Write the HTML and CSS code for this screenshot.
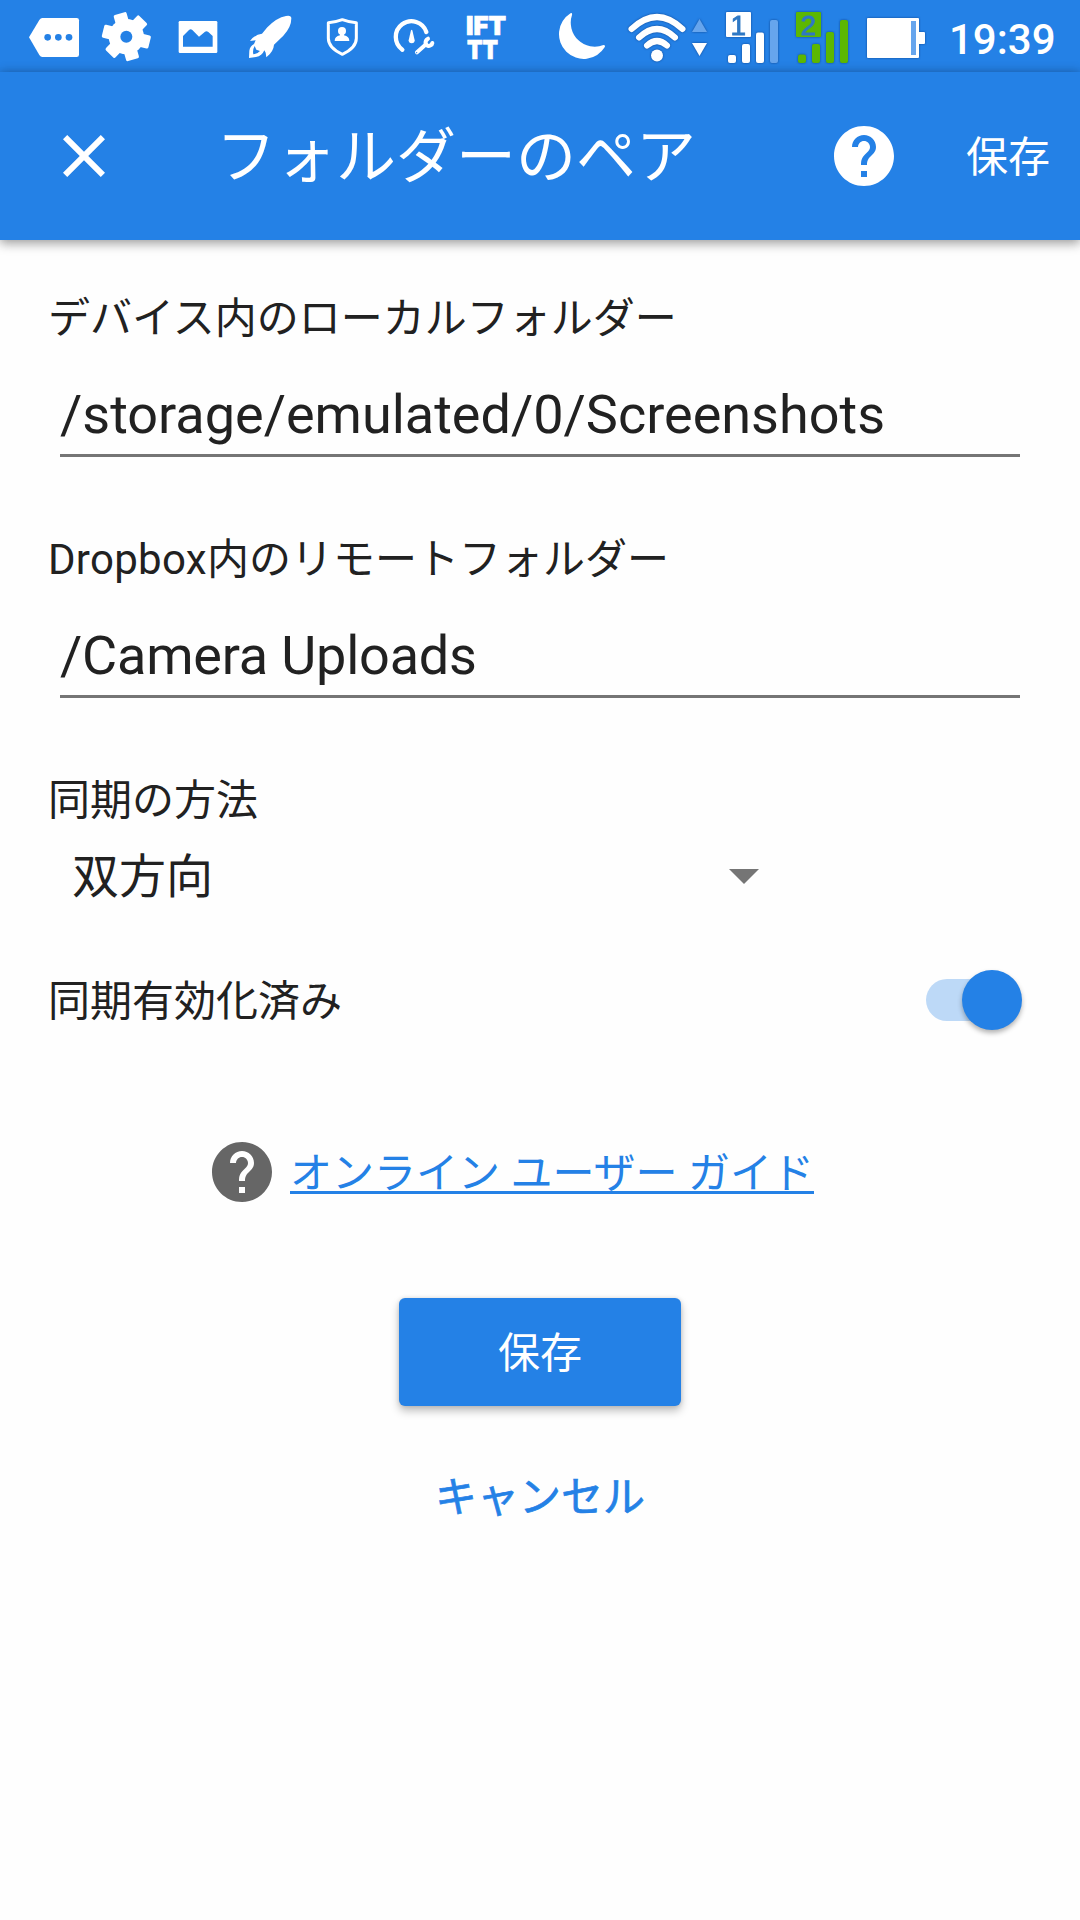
FILE: index.html
```html
<!DOCTYPE html>
<html lang="ja">
<head>
    <meta charset="utf-8">
    <title>フォルダーのペア</title>
    <link rel="stylesheet" href="styles.css">
</head>
<body>
<div class="status">
    <div class="notify">
        <svg width="72" height="72" viewBox="54 0 216 216">
            <path fill="#fff" d="M127 54H230Q237 54 237 61V164Q237 171 230 171H127Q122 171 118 165L87 112L118 60Q122 54 127 54Z"/>
            <g fill="#2481e6"><circle cx="143" cy="112" r="10"/><circle cx="175" cy="112" r="10"/><circle cx="207" cy="112" r="10"/></g>
        </svg>
        <svg width="72" height="72" viewBox="270 0 216 216">
            <g fill="#fff">
                <circle cx="379" cy="110" r="53"/>
                <rect x="307" y="90" width="144" height="40" rx="5" transform="rotate(14 379 110)"/>
                <rect x="307" y="90" width="144" height="40" rx="5" transform="rotate(74 379 110)"/>
                <rect x="307" y="90" width="144" height="40" rx="5" transform="rotate(134 379 110)"/>
            </g>
            <circle cx="379" cy="110" r="18" fill="#2481e6"/>
        </svg>
        <svg width="72" height="72" viewBox="486 0 216 216">
            <rect x="536" y="63" width="116" height="96" rx="4" fill="#fff"/>
            <path fill="#2481e6" d="M549 140V108L567 90Q572 86 577 90L597 110L615 95Q620 92 625 96L638 108V140Z"/>
        </svg>
        <svg width="72" height="72" viewBox="12 0 216 216">
            <path fill="#fff" d="M168 48Q184 45 184 55Q184 82 160 107L132 134Q131 154 109 172L107 158L103 151Q96 168 78 171L57 174L58 152Q60 138 72 132L77 121L60 123Q74 104 96 101L112 82Q140 53 168 48Z"/>
            <path fill="#2481e6" d="M74 138L79 149L90 153Q84 161 70 163Q67 150 74 138Z"/>
        </svg>
        <svg width="72" height="72" viewBox="228 0 216 216">
            <path fill="none" stroke="#fff" stroke-width="9" stroke-linejoin="round" d="M337 59Q358 67 379 68V115Q379 144 337 163Q295 144 295 115V68Q316 67 337 59Z"/>
            <circle cx="336" cy="93" r="12" fill="#fff"/>
            <path fill="#fff" d="M314 123Q314 109 330 106V100H342V106Q358 109 358 123Z"/>
        </svg>
        <svg width="72" height="72" viewBox="444 0 216 216">
            <path fill="none" stroke="#fff" stroke-width="13" stroke-linecap="round" d="M517 149A47 47 0 1 1 589 96"/>
            <path fill="#fff" d="M543 91Q545 88 547 91L554 121A9 9 0 1 1 536 121Z"/>
            <path fill="none" stroke="#fff" stroke-width="12" stroke-linecap="round" d="M561 157L588 133"/>
            <path fill="none" stroke="#fff" stroke-width="12" stroke-linecap="round" stroke-linejoin="round" d="M594 116Q585 121 587 131Q592 141 602 136Q606 134 607 129"/>
            <circle cx="560" cy="158" r="2" fill="#2481e6"/>
        </svg>
        <svg width="72" height="72" viewBox="450 0 72 72">
            <g class="ifttt">
                <text x="466" y="35" textLength="40" lengthAdjust="spacingAndGlyphs">IFT</text>
                <text x="467" y="58.500" textLength="31" lengthAdjust="spacingAndGlyphs">TT</text>
            </g>
        </svg>
    </div>
    <div class="system">
        <svg width="72" height="72" viewBox="545 0 72 72">
            <path fill="#fff" d="M571.500 13.300A24.700 24.700 0 1 0 605.800 47Q606.500 45 604.500 45A24 24 0 0 1 573 15Q573.500 12.500 571.500 13.300Z"/>
        </svg>
        <svg class="outlined" width="96" height="72" viewBox="616 0 96 72">
            <g fill="none" stroke="#fff" stroke-width="6" stroke-linecap="round">
                <path d="M631.500 29Q657 5 682.500 29"/>
                <path d="M639 37.500Q657 20.500 675 37.500"/>
                <path d="M647 45.500Q657 36.500 667 45.500"/>
            </g>
            <circle cx="657" cy="55.500" r="6" fill="#fff"/>
            <path fill="#66a5ed" d="M699.500 19L707 32H692Z"/>
            <path fill="#fff" d="M699.500 56L692 43H707Z"/>
        </svg>
        <svg class="outlined" width="74" height="72" viewBox="712 0 74 72">
            <g fill="#fff">
                <rect x="726" y="12" width="25" height="25" rx="1"/>
                <rect x="728" y="55" width="8" height="8" rx="2"/>
                <rect x="742" y="44" width="8" height="19" rx="2"/>
                <rect x="756" y="32.500" width="8" height="30.500" rx="2"/>
            </g>
            <rect x="770" y="20" width="8" height="43" rx="2" fill="#66a5ed"/>
            <text class="sim" x="730.500" y="34.500">1</text>
        </svg>
        <svg class="outlined" width="72" height="72" viewBox="786 0 72 72">
            <g fill="#5cb702">
                <rect x="796" y="12" width="25" height="25" rx="1"/>
                <rect x="798" y="54.500" width="8" height="8.500" rx="2"/>
                <rect x="812" y="44" width="8" height="19" rx="2"/>
                <rect x="826" y="32" width="8" height="31" rx="2"/>
                <rect x="840" y="20" width="8" height="43" rx="2"/>
            </g>
            <text class="sim" x="800.500" y="34.500">2</text>
        </svg>
        <svg class="outlined" width="91" height="72" viewBox="858 0 91 72">
            <path fill="#fff" d="M868 18H918Q919 18 919 19V32H924Q925 32 925 33V43Q925 44 924 44H919V57Q919 58 918 58H868Q867 58 867 57V19Q867 18 868 18Z"/>
            <rect x="911" y="21" width="5" height="34" fill="#66a5ed"/>
        </svg>
        <span class="clock">19:39</span>
    </div>
</div>

<div class="toolbar">
    <svg class="close" width="42" height="42" viewBox="5 5 14 14">
        <path fill="#fff" d="M19 6.410L17.590 5 12 10.590 6.410 5 5 6.410 10.590 12 5 17.590 6.410 19 12 13.410 17.590 19 19 17.590 13.410 12z"/>
    </svg>
    <h1>フォルダーのペア</h1>
    <svg class="help" width="60" height="60" viewBox="2 2 20 20">
        <path fill="#fff" d="M12 2C6.480 2 2 6.480 2 12s4.480 10 10 10 10-4.480 10-10S17.520 2 12 2zm1 17h-2v-2h2v2zm2.070-7.750l-.9.920C13.450 12.900 13 13.500 13 15h-2v-.5c0-1.100.450-2.100 1.170-2.830l1.240-1.260c.370-.360.590-.860.590-1.410 0-1.100-.9-2-2-2s-2 .9-2 2H8c0-2.210 1.790-4 4-4s4 1.790 4 4c0 .880-.360 1.680-.930 2.250z"/>
    </svg>
    <span class="action">保存</span>
</div>

<div class="form">
    <div class="label">デバイス内のローカルフォルダー</div>
    <div class="field">/storage/emulated/0/Screenshots</div>

    <div class="label"><span class="brand">Dropbox</span>内のリモートフォルダー</div>
    <div class="field remote">/Camera Uploads</div>

    <div class="label">同期の方法</div>
    <div class="select">
        <span>双方向</span>
        <i class="arrow"></i>
    </div>

    <div class="row">
        <span class="state">同期有効化済み</span>
        <div class="switch"><i class="thumb"></i></div>
    </div>
</div>

<div class="guide">
    <svg width="60" height="60" viewBox="2 2 20 20">
        <path fill="#666" d="M12 2C6.480 2 2 6.480 2 12s4.480 10 10 10 10-4.480 10-10S17.520 2 12 2zm1 17h-2v-2h2v2zm2.070-7.750l-.9.920C13.450 12.900 13 13.500 13 15h-2v-.5c0-1.100.450-2.100 1.170-2.830l1.240-1.260c.370-.360.590-.860.590-1.410 0-1.100-.9-2-2-2s-2 .9-2 2H8c0-2.210 1.790-4 4-4s4 1.790 4 4c0 .880-.360 1.680-.930 2.250z"/>
    </svg>
    <a class="link">オンライン ユーザー ガイド</a>
</div>

<div class="buttons">
    <div class="save">保存</div>
    <div class="cancel">キャンセル</div>
</div>
</body>
</html>
```
FILE: styles.css
```css
body{
    margin: 0;
    width: 1080px;
    height: 1920px;
    overflow: hidden;
    background: #fefefe;
    color: #212121;
    font-family: Roboto, "Noto Sans CJK JP", sans-serif;
    font-size: 42px;
    line-height: 60px;
}
svg{
    display: block;
    flex: none;
}

/* status bar */
.status{
    display: flex;
    height: 72px;
    background: #2481e6;
}
.notify, .system{
    display: flex;
}
.notify{
    padding-left: 18px;
    margin-right: 22px;
}
.outlined{
    filter: drop-shadow(0 0 1px rgba(0, 30, 90, .6));
}
.ifttt{
    fill: #fff;
    stroke: #fff;
    stroke-width: .7px;
    font: 900 26px Inter, sans-serif;
}
.sim{
    fill: #2e78c4;
    stroke: #2e78c4;
    stroke-width: .8px;
    font: 28px "Liberation Sans", sans-serif;
}
.clock{
    color: #fff;
    font-size: 42px;
    font-weight: 500;
    line-height: 80px;
}

/* app bar */
.toolbar{
    position: relative;
    display: flex;
    align-items: center;
    box-sizing: border-box;
    height: 168px;
    padding: 0 30px 0 63px;
    background: #2481e6;
    color: #fff;
    box-shadow: 0 0 10px rgba(0, 0, 0, .25), 0 5px 10px rgba(0, 0, 0, .22);
}
.toolbar h1{
    margin: 0 0 0 111px;
    padding-top: 4px;
    font-size: 60px;
    font-weight: 400;
    line-height: 72px;
}
.help{
    margin-left: auto;
}
.action{
    margin-left: 72px;
    padding-top: 4px;
}

/* form */
.form{
    padding: 49px 60px 0 48px;
}
.field{
    margin: 30px 0 73px 12px;
    padding-bottom: 3px;
    border-bottom: 3px solid #757575;
    font-size: 54px;
    line-height: 72px;
}
.brand{
    letter-spacing: .3px;
}
.remote{
    letter-spacing: -.2px;
}
.select{
    display: flex;
    align-items: center;
    justify-content: space-between;
    width: 687px;
    margin: 16px 0 62px 24px;
    font-size: 47px;
}
.arrow{
    margin-bottom: 2px;
    border: 15px solid transparent;
    border-top-color: #757575;
    border-bottom: 0;
}
.row{
    display: flex;
    align-items: center;
    justify-content: space-between;
    height: 61px;
}
.state{
    padding-top: 4px;
}
.switch{
    display: flex;
    align-items: center;
    justify-content: flex-end;
    width: 90px;
    height: 42px;
    margin-right: 4px;
    border-radius: 21px;
    background: #bdd9f7;
}
.thumb{
    width: 60px;
    height: 60px;
    margin-right: -5.5px;
    border-radius: 50%;
    background: #2481e6;
    box-shadow: 0 3px 5px rgba(0, 0, 0, .3);
    flex: none;
}

/* link and buttons */
.guide{
    display: flex;
    height: 60px;
    margin: 112px 0 96px 212px;
}
.link{
    margin-left: 18px;
    padding-top: 2px;
    color: #2481e6;
    text-decoration: underline;
    text-decoration-thickness: 3px;
    text-decoration-skip-ink: none;
    text-underline-offset: 3px;
}
.buttons{
    display: flex;
    flex-direction: column;
    align-items: center;
}
.save{
    width: 282px;
    height: 108px;
    border-radius: 6px;
    background: #2481e6;
    box-shadow: 0 5px 8px rgba(0, 0, 0, .25), 0 0 4px rgba(0, 0, 0, .12);
    color: #fff;
    line-height: 112px;
    text-align: center;
}
.cancel{
    margin-top: 62px;
    color: #2481e6;
    -webkit-text-stroke: .7px #2481e6;
}
```
